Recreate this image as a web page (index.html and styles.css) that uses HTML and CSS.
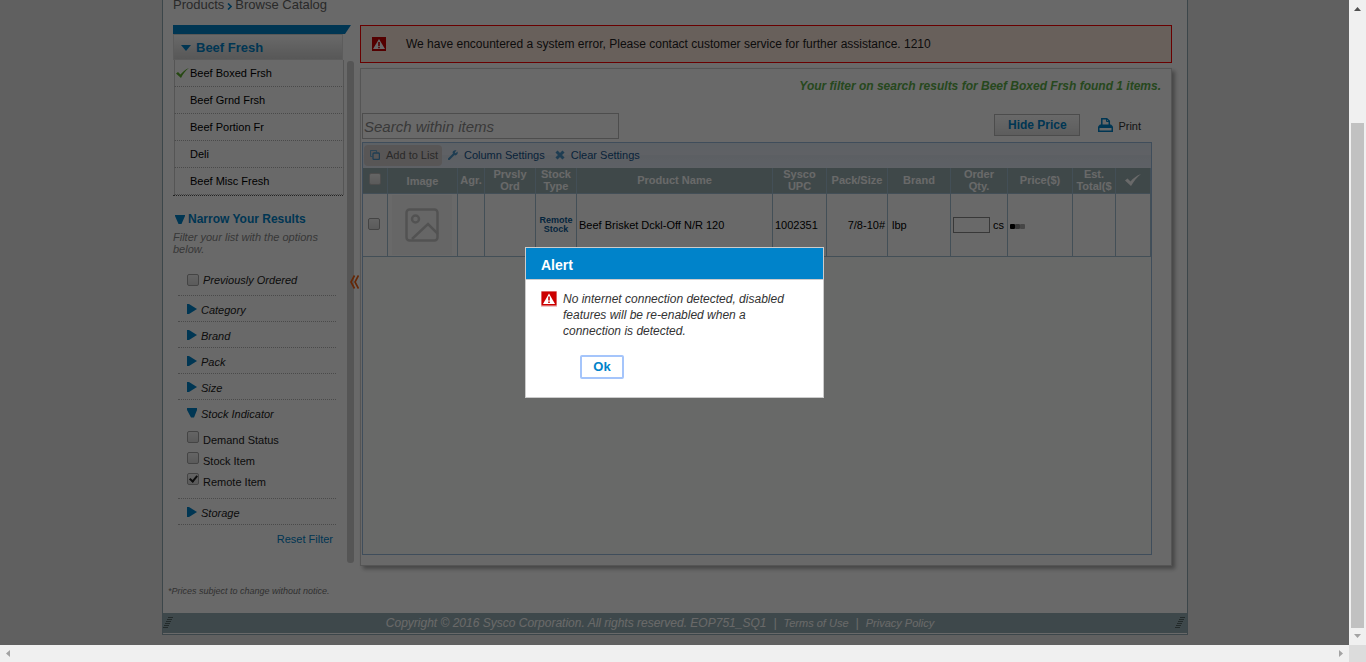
FILE: index.html
```html
<!DOCTYPE html>
<html lang="en">
<head>
<meta charset="utf-8">
<title>Browse Catalog</title>
<link rel="stylesheet" href="styles.css">
</head>
<body>
<div class="window">
  <div class="viewport">
    <div class="page">
      <nav class="breadcrumb">Products <svg width="5" height="7" viewBox="0 0 5 7"><path d="M1 .5 4 3.5 1 6.5" fill="none" stroke="#0083ca" stroke-width="1.6"/></svg> Browse Catalog</nav>
      <div class="columns">
        <aside class="left">
          <div class="tab-bar"></div>
          <div class="left-body">
            <div class="sidebar">
              <h2 class="cat-head"><svg width="10" height="6" viewBox="0 0 10 6"><path d="M0 0h10L5 6z" fill="#0083ca"/></svg>Beef Fresh</h2>
              <ul class="cats">
                <li><svg class="tick" width="13" height="10" viewBox="0 0 13 10"><path d="M0 5.500 2 4l2.500 2.500C6.500 4 9 1.500 13 0 9.500 2.500 7 6 5 10z" fill="#5cae2c"/></svg>Beef Boxed Frsh</li>
                <li>Beef Grnd Frsh</li>
                <li>Beef Portion Fr</li>
                <li>Deli</li>
                <li>Beef Misc Fresh</li>
              </ul>
              <h3 class="narrow"><svg width="10" height="9" viewBox="0 0 10 9"><path d="M0 0h10v1L6.500 9h-3L0 1z" fill="#0083ca"/></svg>Narrow Your Results</h3>
              <p class="hint">Filter your list with the options below.</p>
              <div class="filters">
                <div class="prev"><input class="cb" type="checkbox" id="prev"><label for="prev">Previously Ordered</label></div>
                <div class="facet"><svg width="10" height="10" viewBox="0 0 10 10"><path d="M0 0h2l8 5-8 5H0z" fill="#0083ca"/></svg>Category</div>
                <div class="facet"><svg width="10" height="10" viewBox="0 0 10 10"><path d="M0 0h2l8 5-8 5H0z" fill="#0083ca"/></svg>Brand</div>
                <div class="facet"><svg width="10" height="10" viewBox="0 0 10 10"><path d="M0 0h2l8 5-8 5H0z" fill="#0083ca"/></svg>Pack</div>
                <div class="facet"><svg width="10" height="10" viewBox="0 0 10 10"><path d="M0 0h2l8 5-8 5H0z" fill="#0083ca"/></svg>Size</div>
                <div class="facet open"><svg width="10" height="10" viewBox="0 0 10 10"><path d="M0 0h10v2L7 9.500H4L0 2z" fill="#0083ca"/></svg>Stock Indicator</div>
                <div class="options">
                  <div class="opt"><input class="cb" type="checkbox" id="demand"><label for="demand">Demand Status</label></div>
                  <div class="opt"><input class="cb" type="checkbox" id="stock"><label for="stock">Stock Item</label></div>
                  <div class="opt"><input class="cb" type="checkbox" id="remote" checked><label for="remote">Remote Item</label></div>
                </div>
                <div class="facet"><svg width="10" height="10" viewBox="0 0 10 10"><path d="M0 0h2l8 5-8 5H0z" fill="#0083ca"/></svg>Storage</div>
              </div>
              <a class="reset" href="#">Reset Filter</a>
            </div>
            <div class="splitter"><svg class="collapse" width="9" height="14" viewBox="0 0 9 14"><path d="M4.500 .5 1 7l3.500 6.500M8.500 .5 5 7l3.500 6.500" fill="none" stroke="#f26011" stroke-width="1.700"/></svg></div>
          </div>
        </aside>
        <main class="main">
          <div class="error">
            <svg width="15" height="15" viewBox="0 0 15 15"><path d="M0 0h14v14H0z" fill="#c00"/><path d="M7 2 13 12H1z" fill="#fff"/><path d="M6.200 5h1.600v4H6.200zM6.200 9.800h1.600v1.400H6.200z" fill="#c00"/></svg>
            <span>We have encountered a system error, Please contact customer service for further assistance. 1210</span>
          </div>
          <section class="panel">
            <p class="found">Your filter on search results for Beef Boxed Frsh found 1 items.</p>
            <div class="tools">
              <input class="search" type="text" placeholder="Search within items" aria-label="Search within items">
              <div class="tools-right">
                <button class="hide-price" type="button">Hide Price</button>
                <a class="print" href="#"><svg width="15" height="14" viewBox="0 0 15 14"><path d="M3.800 7V.8h5L11.300 3v4" fill="none" stroke="#0083ca" stroke-width="1.500"/><path d="M8.500 1v2.500H11" fill="none" stroke="#0083ca"/><path d="M2 6.500h11L15 8.500V14H0V8.500z" fill="#0083ca"/><path d="M1.500 10h12v2.500h-12z" fill="#fff"/></svg>Print</a>
              </div>
            </div>
            <div class="grid">
              <div class="toolbar">
                <button class="tb add" type="button"><svg width="10" height="10" viewBox="0 0 10 10"><path d="M2.500 6.500H1.200a.7.7 0 0 1-.7-.7V1.200a.7.7 0 0 1 .7-.7h4.600a.7.7 0 0 1 .7.700v1.300" fill="none" stroke="#6da8cf" stroke-width="1.200"/><rect x="3" y="3" width="6.400" height="6.400" rx="1" fill="none" stroke="#4c95c8" stroke-width="1.300"/></svg>Add to List</button>
                <button class="tb" type="button"><svg width="10" height="10" viewBox="0 0 10 10"><path d="M1 9 6 4" stroke="#4c95c8" stroke-width="2.200" stroke-linecap="round"/><path d="M8.500 .6 6.800 2.300l.9.900L9.400 1.500C10.400 3.500 9 5.600 7 5.400L4.600 3C4.500 1 6.500-.4 8.500.6z" fill="#4c95c8"/></svg>Column Settings</button>
                <button class="tb" type="button"><svg width="10" height="10" viewBox="0 0 10 10"><path d="m1.500 1.500 7 7m0-7-7 7" stroke="#4c95c8" stroke-width="3"/></svg>Clear Settings</button>
              </div>
              <table class="items">
                <colgroup><col class="w25"><col class="w70"><col class="w27"><col class="w51"><col class="w41"><col><col class="w54"><col class="w61"><col class="w63"><col class="w57"><col class="w65"><col class="w43"><col class="w35"></colgroup>
                <thead>
                  <tr>
                    <th><input class="cb light" type="checkbox" aria-label="Select all"></th>
                    <th class="image">Image</th><th>Agr.</th><th>Prvsly Ord</th><th>Stock Type</th><th>Product Name</th><th>Sysco UPC</th><th>Pack/Size</th><th>Brand</th><th>Order<br>Qty.</th><th>Price($)</th><th>Est. Total($</th>
                    <th><svg width="16" height="12" viewBox="0 0 16 12"><path d="M0 6.500 2.500 4.500l3 3C8 4.500 11 2 16 0c-4 3-7 7-10 12z" fill="#fff"/></svg></th>
                  </tr>
                </thead>
                <tbody>
                  <tr>
                    <td class="c"><input class="cb" type="checkbox" aria-label="Select Beef Brisket"></td>
                    <td class="c"><div class="thumb"><svg width="34" height="34" viewBox="0 0 34 34" fill="none" stroke="#c8c8c8" stroke-width="2.500"><rect x="1.500" y="1.500" width="31" height="31" rx="3"/><circle cx="10.500" cy="11" r="3.500"/><path d="m7 31 16-15 10 10"/></svg></div></td>
                    <td></td><td></td>
                    <td class="c remote">Remote Stock</td>
                    <td>Beef Brisket Dckl-Off N/R 120</td>
                    <td>1002351</td>
                    <td class="r">7/8-10#</td>
                    <td class="brand">lbp</td>
                    <td><div class="qty"><input class="qty-in" type="text" aria-label="Order quantity">cs</div></td>
                    <td><svg class="busy" width="16" height="6" viewBox="0 0 16 6"><rect width="5" height="5" rx="1"/><rect x="5" width="5" height="5" rx="1" fill="#888"/><rect x="10" width="5" height="5" rx="1" fill="#aaa"/></svg></td>
                    <td></td><td></td>
                  </tr>
                </tbody>
              </table>
            </div>
          </section>
        </main>
      </div>
      <p class="note">*Prices subject to change without notice.</p>
      <footer class="footer">
        <svg width="12" height="12" viewBox="0 0 12 12"><path d="M5 .5h5M4 2.500h5M3 4.500h5M2 6.500h5M1 8.500h5M0 10.500h5" stroke="#566"/></svg>
        <div class="legal"><span>Copyright © 2016 Sysco Corporation. All rights reserved. EOP751_SQ1</span><span>|</span><a href="#">Terms of Use</a><span>|</span><a href="#">Privacy Policy</a></div>
        <svg width="12" height="12" viewBox="0 0 12 12"><path d="M5 .5h5M4 2.500h5M3 4.500h5M2 6.500h5M1 8.500h5M0 10.500h5" stroke="#566"/></svg>
      </footer>
    </div>
    <div class="overlay">
      <div class="dialog" role="alertdialog" aria-labelledby="alert-title">
        <h1 id="alert-title">Alert</h1>
        <div class="dialog-body">
          <div class="msg">
            <svg width="16" height="16" viewBox="0 0 16 16"><path d="M0 0h16v16H0z" fill="#f0c8c8"/><path d="M.5.500h15v14H.5z" fill="#c00"/><path d="M8 2.500 14 13H2z" fill="#fff"/><path d="M7.200 5.500h1.600v4H7.200zM7.200 10.500h1.600V12H7.200z" fill="#c00"/></svg>
            <p>No internet connection detected, disabled features will be re-enabled when a connection is detected.</p>
          </div>
          <button class="ok" type="button">Ok</button>
        </div>
      </div>
    </div>
  </div>
  <div class="vbar"><svg width="7" height="4" viewBox="0 0 7 4"><path d="M0 4h7L3.500 0z" fill="#505050"/></svg><div class="vtrack"><div class="vthumb"></div></div><svg width="7" height="4" viewBox="0 0 7 4"><path d="M0 0h7L3.500 4z" fill="#a3a3a3"/></svg></div>
  <div class="hbar"><svg width="4" height="7" viewBox="0 0 4 7"><path d="M4 0v7L0 3.500z" fill="#a3a3a3"/></svg><svg width="4" height="7" viewBox="0 0 4 7"><path d="M0 0v7l4-3.500z" fill="#a3a3a3"/></svg></div>
  <div class="corner"></div>
</div>
</body>
</html>
```
FILE: styles.css
```css
* { box-sizing: border-box; }
body { margin: 0; font: 11px/12px "Liberation Sans", Arial, sans-serif; color: #222; }
h1, h2, h3, p, ul { margin: 0; padding: 0; }
a { text-decoration: none; color: inherit; }
svg { display: block; flex: none; }
button { font: inherit; color: inherit; cursor: pointer; }

.window { display: grid; grid-template-columns: 1fr 17px; grid-template-rows: 1fr 17px; height: 100vh; }
.viewport { position: relative; overflow: hidden; background: #eaeaea; padding-left: 1px; }
.page { display: flex; flex-direction: column; max-width: 1026px; margin: 0 auto; background: #fff; border: 1px solid #93abb5; border-top: 0; }

.breadcrumb { display: flex; align-items: center; gap: 3px; height: 25px; padding: 0 10px 15px; font-size: 13px; line-height: 10px; color: #666; }
.breadcrumb svg { margin-top: 2px; }
.columns { display: flex; gap: 9px; padding: 0 15px 0 10px; }
.left { flex: none; width: 178px; }
.tab-bar { height: 9px; background: #0083ca; clip-path: polygon(0 0, 100% 0, calc(100% - 6px) 100%, 0 100%); }
.left-body { display: flex; gap: 4px; }
.sidebar { flex: none; width: 170px; }
.splitter { flex: none; position: relative; width: 7px; height: 502px; margin-top: 27px; background: #cfcfcf; border-radius: 3px; }
.collapse { position: absolute; left: 3px; top: 214px; }

.cat-head { display: flex; align-items: center; gap: 5px; height: 26px; padding: 1px 7px 0; font-size: 13px; color: #0083ca; background: linear-gradient(#fff, #d4d4d4); border: 1px solid #e0e0e0; border-top-color: #d6d6d6; }
.cats { list-style: none; border-bottom: 1px dotted #555; color: #000; }
.cats li { position: relative; height: 27px; margin: 0 -1px 0 1px; padding: 0 15px; line-height: 26px; border: solid #cfcfcf; border-width: 0 1px; border-bottom: 1px dotted #b5b5b5; }
.tick { position: absolute; left: 1px; top: 8px; }
.narrow { display: flex; align-items: center; gap: 3px; margin-top: 15px; padding-left: 2px; height: 16px; font-size: 12px; color: #0083ca; }
.hint { margin-top: 4px; padding-right: 16px; font-style: italic; color: #888; }
.filters { margin: 12px 7px 0 5px; }
.prev, .facet { display: flex; align-items: center; height: 26px; padding-left: 9px; border-bottom: 1px dotted #b5b5b5; font-style: italic; }
.prev { height: 29px; gap: 4px; padding-bottom: 2px; }
.filters .prev { margin-top: 11px; }
.facet { gap: 4px; padding-top: 3px; }
.facet svg { margin-bottom: 3px; }
.facet.open { height: 25px; border-bottom: 0; }
.options { padding: 2px 0 8px 9px; border-bottom: 1px dotted #b5b5b5; }
.opt { display: flex; gap: 4px; height: 21px; padding-top: 4px; }
.opt label { padding-top: 3px; }
.reset { display: block; margin: 8px 10px 0; text-align: right; color: #0083ca; }

.cb { appearance: none; position: relative; flex: none; width: 12px; height: 12px; margin: 0; border: 1px solid #a5a5a5; border-radius: 2px; background: linear-gradient(#f4f4f4, #dcdcdc); }
.cb.light { border-color: #bbb; }
.cb:checked::after { content: ""; box-sizing: border-box; position: absolute; left: 3px; top: 0; width: 5px; height: 8px; border: solid #222; border-width: 0 2px 2px 0; transform: rotate(40deg); }

.main { flex: 1; min-width: 0; }
.error { display: flex; align-items: center; gap: 19px; height: 38px; padding: 0 11px; border: 1px solid #f00; background: #fde9dd; font-size: 12px; }
.panel { height: 498px; margin-top: 5px; padding: 0 19px 0 1px; border: 1px solid #cfcfcf; box-shadow: 3px 3px 4px #aaa; background: #fff; }
.found { margin-right: -9px; padding: 10px 0 20px; line-height: 14px; text-align: right; font-size: 12px; font-weight: bold; font-style: italic; color: #5cae4a; }
.tools { display: flex; justify-content: space-between; height: 29px; }
.search { width: 257px; height: 26px; padding: 0 1px; border: 1px solid #bbb; background: #fff; font: italic 15px "Liberation Sans", Arial, sans-serif; }
.search::placeholder { color: #8b8b8b; }
.tools-right { display: flex; gap: 18px; padding-right: 11px; align-items: flex-start; }
.hide-price { width: 86px; height: 22px; margin-top: 1px; padding: 0; border: 1px solid #b8b8b8; background: linear-gradient(#fff, #e2e2e2); color: #0083ca; font-size: 12px; font-weight: bold; }
.print { display: flex; gap: 5px; align-items: center; height: 26px; color: #333; }
.print svg { margin-bottom: 2px; }

.grid { height: 413px; border: 1px solid #99bbdd; background: #fcfefd; }
.toolbar { display: flex; align-items: center; gap: 1px; height: 25px; padding: 0 1px; background: linear-gradient(#e2ecf6, #e8ecf4 50%, #dfe6f0 50%, #e4ebf6); color: #15568f; }
.tb { display: flex; align-items: center; gap: 6px; height: 21px; padding: 0 4px 2px 5px; border: 0; border-radius: 4px; background: none; }
.tb.add { background: #d6d0d0; color: #666; padding-left: 6px; }

.items { width: 100%; table-layout: fixed; border-collapse: separate; border-spacing: 0; background: #fff; }
.items th, .items td { padding: 0 2px; border-right: 1px solid #a3bfd4; border-bottom: 1px solid #a3bfd4; overflow: hidden; }
.items th { height: 26px; background: #9aafb2; color: #fff; vertical-align: middle; padding: 0 1px 1px; line-height: 12px; }
.items th.image { padding: 1px 1px 0; }
.items th > *, .items td > * { margin: 0 auto; }
.items td { height: 63px; color: #000; text-align: left; }
.items .c { text-align: center; padding: 0 3px 0 1px; }
.items .r { text-align: right; }
.items .brand { padding-left: 4px; }
.items td > .busy { margin: 3px 0 0; }
.items .remote { padding: 0; font-size: 9px; line-height: 9px; font-weight: bold; color: #0c5a96; }
.w25 { width: 25px; } .w70 { width: 70px; } .w27 { width: 27px; } .w51 { width: 51px; } .w41 { width: 41px; }
.w54 { width: 54px; } .w61 { width: 61px; } .w63 { width: 63px; } .w57 { width: 57px; } .w65 { width: 65px; }
.w43 { width: 43px; } .w35 { width: 35px; }
.thumb { display: grid; place-items: center; width: 60px; height: 60px; background: #f8f8f8; }
.qty { display: flex; align-items: center; gap: 3px; }
.qty-in { width: 37px; height: 16px; padding: 0; border: 1px solid #888; background: #fff; }

.note { padding: 19px 5px 16px; font-size: 9px; font-style: italic; color: #777; }
.footer { display: flex; align-items: center; justify-content: space-between; height: 20px; margin-bottom: 1px; background: #98b0b6; color: #fff; font-style: italic; }
.legal { display: flex; gap: 7px; align-items: center; padding-right: 30px; }
.legal span { font-size: 12px; }

.overlay { position: absolute; inset: 0; display: flex; align-items: center; justify-content: center; background: rgba(0, 0, 0, .59); }
.dialog { width: 299px; border: 1px solid #ccc; background: #fff; }
.dialog h1 { padding: 9px 15px 6px; background: #0083ca; border-bottom: 1px solid #ccc; color: #fff; font-size: 14px; line-height: 16px; }
.dialog-body { padding: 11px 30px 18px 15px; }
.msg { display: flex; gap: 6px; font-size: 12px; line-height: 16px; font-style: italic; color: #333; }
.ok { display: block; width: 44px; height: 24px; margin: 16px 0 0 39px; padding: 0; border: 2px solid #a5c5fb; border-radius: 2px; background: #fff; color: #0083ca; font-size: 13px; font-weight: bold; }

.vbar { display: flex; flex-direction: column; align-items: center; padding: 7px 2px; background: #f0f0f0; }
.vtrack { flex: 1; display: flex; align-items: flex-end; width: 100%; padding: 5px 0 6px; }
.vthumb { width: 100%; height: 82.5%; background: #c1c1c1; }
.hbar { display: flex; align-items: center; justify-content: space-between; padding: 0 6px; background: #f0f0f0; }
.corner { background: #dcdcdc; }
```
